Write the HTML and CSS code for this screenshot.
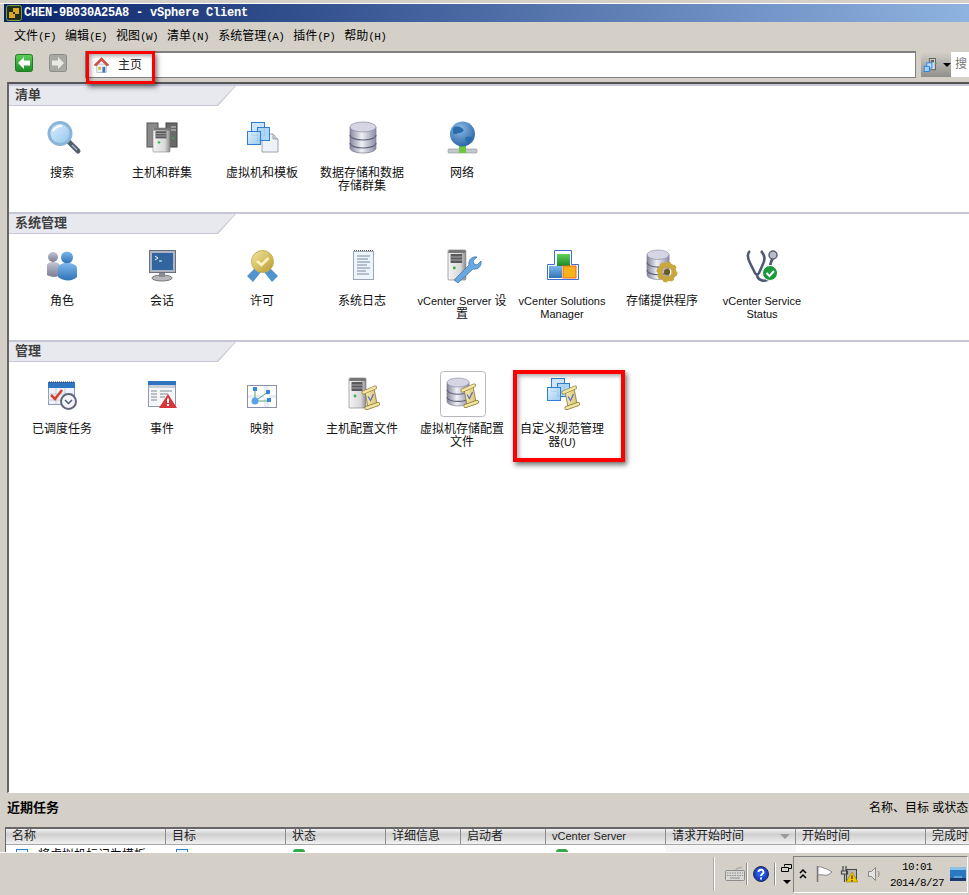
FILE: index.html
```html
<!DOCTYPE html>
<html lang="zh-CN">
<head>
    <meta charset="UTF-8">
    <title>vSphere Client</title>
    <link rel="stylesheet" href="styles.css">
</head>
<body>
    <!-- Formas compartilhadas dos icones -->
    <svg class="defs" aria-hidden="true">
        <defs>
            <linearGradient id="gSteel" x1="0" x2="1" y1="0" y2="0"><stop offset="0" stop-color="#85869c"/><stop offset=".45" stop-color="#f0f0f6"/><stop offset="1" stop-color="#8b8ca6"/></linearGradient>
            <linearGradient id="gBody" x1="0" x2="1" y1="0" y2="0"><stop offset="0" stop-color="#f4f4f4"/><stop offset=".7" stop-color="#d8d8d8"/><stop offset="1" stop-color="#8c8c8c"/></linearGradient>
            <linearGradient id="gGlass" x1="0" x2="1" y1="0" y2="1"><stop offset="0" stop-color="#dff0fc"/><stop offset="1" stop-color="#8fc4ee"/></linearGradient>
            <linearGradient id="gBlue" x1="0" x2="0" y1="0" y2="1"><stop offset="0" stop-color="#7db8ea"/><stop offset="1" stop-color="#2f74b8"/></linearGradient>
            <linearGradient id="gGrey" x1="0" x2="0" y1="0" y2="1"><stop offset="0" stop-color="#c4c4d4"/><stop offset="1" stop-color="#7c7c94"/></linearGradient>
            <linearGradient id="gGold" x1="0" x2="1" y1="0" y2="1"><stop offset="0" stop-color="#f4e8a0"/><stop offset="1" stop-color="#b89a30"/></linearGradient>
            <linearGradient id="gGreen" x1="0" x2="0" y1="0" y2="1"><stop offset="0" stop-color="#5fd05a"/><stop offset="1" stop-color="#1c8a26"/></linearGradient>
            <linearGradient id="gParch" x1="0" x2="1" y1="0" y2="0"><stop offset="0" stop-color="#f6eeb8"/><stop offset="1" stop-color="#d8c470"/></linearGradient>
            <radialGradient id="gGlobe" cx=".4" cy=".3" r=".8"><stop offset="0" stop-color="#8dbce8"/><stop offset="1" stop-color="#1f5c9e"/></radialGradient>

            <g id="db">
                <path d="M0 5v21c0 3 6 5 13 5s13-2 13-5V5z" fill="url(#gSteel)" stroke="#77788e" stroke-width=".7"/>
                <ellipse cx="13" cy="5" rx="13" ry="5" fill="#d5d5e4" stroke="#8c8ca4" stroke-width=".7"/>
                <path d="M0 13c0 3 6 5 13 5s13-2 13-5M0 21c0 3 6 5 13 5s13-2 13-5" fill="none" stroke="#62637c" stroke-width="1.2"/>
            </g>
            <g id="server">
                <rect width="17" height="30" rx="1" fill="url(#gBody)" stroke="#777" stroke-width=".6"/>
                <path d="M1 0h15l1 3H0z" fill="#777"/>
                <rect x="2.5" y="4" width="11" height="9" fill="#5a5a5e"/>
                <path d="M2.5 7h11M2.5 10h11" stroke="#a8a8a8"/>
                <circle cx="6" cy="18" r="1.4" fill="#35b54a"/>
            </g>
            <g id="scroll">
                <path d="M3 5L12 2l3 16-9 3z" fill="url(#gParch)" stroke="#8a7a38" stroke-width=".8"/>
                <path d="M1.500 6.500L13 1.500M4.500 22L16 18" fill="none" stroke="#8a7a38" stroke-width="4" stroke-linecap="round"/>
                <path d="M1.500 6.500L13 1.500M4.500 22L16 18" fill="none" stroke="#f0e4a0" stroke-width="2.600" stroke-linecap="round"/>
                <path d="M6 10.500l2.500 4 3-6.500" fill="none" stroke="#5f66c8" stroke-width="1.200"/>
            </g>
            <g id="windows">
                <rect x="4.5" y=".5" width="13" height="13" fill="#cfe6fa" stroke="#2f7fd0"/>
                <rect x="10.5" y="5.5" width="12" height="13" fill="#a9d3f5" fill-opacity=".9" stroke="#2f7fd0"/>
                <rect x=".5" y="9.5" width="13" height="13" fill="url(#gGlass)" fill-opacity=".9" stroke="#2f7fd0"/>
            </g>
        </defs>
    </svg>

    <div class="top-edge"></div>

    <div class="titlebar">
        <svg class="logo" viewBox="0 0 16 16"><rect x=".5" y=".5" width="15" height="15" rx="2" fill="#20301c" stroke="#7ba13a"/><path d="M3 7h4V3h6v6H9v4H3z" fill="#e0a820"/><path d="M7 7h2v2H7z" fill="#20301c"/></svg>
        <span class="title-text">CHEN-9B030A25A8 - vSphere Client</span>
    </div>

    <nav class="menubar">
        <span>文件<i>(F)</i></span>
        <span>编辑<i>(E)</i></span>
        <span>视图<i>(W)</i></span>
        <span>清单<i>(N)</i></span>
        <span>系统管理<i>(A)</i></span>
        <span>插件<i>(P)</i></span>
        <span>帮助<i>(H)</i></span>
    </nav>

    <div class="toolbar">
        <svg class="nav-btn" viewBox="0 0 18 18"><rect x=".5" y=".5" width="17" height="17" rx="2" fill="url(#gGreen)" stroke="#1f7a22"/><path d="M3 9l6-6v3.500h6v5H9V15z" fill="#fff"/></svg>
        <svg class="nav-btn nav-next" viewBox="0 0 18 18"><rect x=".5" y=".5" width="17" height="17" rx="2" fill="#a8a8a4" stroke="#8c8c88"/><path d="M15 9L9 3v3.500H3v5h6V15z" fill="#e8e8e4"/></svg>
        <div class="address">
            <svg class="home" viewBox="0 0 16 16"><rect x="3" y="7" width="10" height="9" fill="#eef2f8" stroke="#8fa0b8" stroke-width=".6"/><path d="M0 8l8-8 8 8-2.500 1L8 3.500 2.500 9z" fill="#d9534a" stroke="#a83a30" stroke-width=".5"/><rect x="4.500" y="10" width="3" height="3" fill="#e8b040"/><rect x="9" y="10" width="3" height="6" fill="#3a78b8"/></svg>
            <span>主页</span>
        </div>
        <div class="scope-btn">
            <svg width="22" height="20" viewBox="0 0 22 20"><rect x="8.500" y="2.500" width="7" height="13" fill="#d8d8dc" stroke="#555"/><rect x="10" y="4" width="4" height="3" fill="#666"/><path d="M15 8h3" stroke="#2ec04a"/><rect x="5.500" y="7.500" width="6" height="6" fill="#bfe0fa" stroke="#1f7fe0"/><rect x="2.500" y="11.500" width="6" height="6" fill="#9fd0f8" stroke="#1f7fe0"/></svg>
            <b class="caret"></b>
        </div>
        <div class="search-box">搜</div>
    </div>

    <main class="home-panel">
        <section class="group">
            <div class="group-head"><h2>清单</h2></div>
            <div class="items">
                <a class="item"><svg class="icon" viewBox="0 0 48 48"><path d="M31 28l9 9" stroke="#52606e" stroke-width="5" stroke-linecap="round"/><path d="M34 31l5 5" stroke="#9fb0c0" stroke-width="1.500"/><circle cx="22" cy="19.500" r="11" fill="url(#gGlass)" stroke="#8ab4d8" stroke-width="3"/><path d="M15 17c2-4 5-5 9-5" fill="none" stroke="#fff" stroke-width="2"/></svg><span class="label">搜索</span></a>
                <a class="item"><svg class="icon" viewBox="0 0 48 48"><rect x="9" y="9" width="11" height="24" fill="#8a8a8a" stroke="#555"/><rect x="28" y="9" width="11" height="24" fill="#6a6a6a" stroke="#444"/><path d="M33 13h5M33 16h5" stroke="#ccc"/><circle cx="35" cy="24" r="1" fill="#35b54a"/><use href="#server" transform="translate(15 14) scale(1 .8)"/></svg><span class="label">主机和群集</span></a>
                <a class="item"><svg class="icon" viewBox="0 0 48 48"><path d="M24 20h11l5 5v13H24z" fill="#eef2f6" stroke="#9aa4b0"/><path d="M35 20v5h5" fill="#c8d0d8" stroke="#9aa4b0"/><use href="#windows" transform="translate(9 8)"/></svg><span class="label">虚拟机和模板</span></a>
                <a class="item"><svg class="icon" viewBox="0 0 48 48"><use href="#db" transform="translate(12 8)"/></svg><span class="label">数据存储和数据存储群集</span></a>
                <a class="item"><svg class="icon" viewBox="0 0 48 48"><rect x="10" y="35" width="29" height="4" rx="1" fill="#c4c8cc" stroke="#8a9098" stroke-width=".6"/><rect x="21" y="31" width="7" height="8" fill="#6cc83c"/><circle cx="24.500" cy="20" r="12.500" fill="url(#gGlobe)"/><path d="M15 14c4-3 8-1 10 1s-2 4-4 4-4 3-6 0zM27 24c3-2 7-1 8 0-1 3-3 6-6 6z" fill="#2a6bad"/></svg><span class="label">网络</span></a>
            </div>
        </section>

        <section class="group">
            <div class="group-head"><h2>系统管理</h2></div>
            <div class="items">
                <a class="item"><svg class="icon" viewBox="0 0 48 48"><circle cx="15" cy="15" r="5" fill="url(#gGrey)"/><path d="M9 33V24c0-3 3-4 6-4s7 1 7 4v9c-4 3-10 2-13 0z" fill="url(#gGrey)"/><circle cx="29" cy="15.500" r="6" fill="url(#gBlue)"/><path d="M20 35V26c0-3 4-5 9-5s10 2 10 5v9c-5 5-14 4-19 0z" fill="url(#gBlue)"/></svg><span class="label">角色</span></a>
                <a class="item"><svg class="icon" viewBox="0 0 48 48"><ellipse cx="24" cy="36" rx="10" ry="3" fill="#b8b8bc" stroke="#77777c"/><rect x="21" y="30" width="6" height="5" fill="#8a8a90"/><rect x="11.500" y="8.500" width="26" height="22" fill="#aeb4c2" stroke="#6a7080"/><rect x="14" y="11" width="21" height="17" fill="#31659f"/><path d="M17 14l3 2-3 2M21 19h3" fill="none" stroke="#fff"/></svg><span class="label">会话</span></a>
                <a class="item"><svg class="icon" viewBox="0 0 48 48"><path d="M18 25L9 34l6 6 8-10zM31 25l9 9-6 6-8-10z" fill="#4f94ce"/><circle cx="24.500" cy="19.500" r="11" fill="url(#gGold)" stroke="#c8ae50"/><path d="M19 19l4.500 4 7-7" fill="none" stroke="#fff3c0" stroke-width="2.500"/></svg><span class="label">许可</span></a>
                <a class="item"><svg class="icon" viewBox="0 0 48 48"><rect x="15.500" y="9.500" width="20" height="28" fill="#eef4fb" stroke="#9aa8b8"/><path d="M16 9h1M18 9h1M20 9h1M22 9h1M24 9h1M26 9h1M28 9h1M30 9h1M32 9h1M34 9h1" stroke="#555" stroke-width="1" transform="translate(0 -.5)"/><path d="M19 14h13M19 17h11M19 20h13M19 23h10M19 26h13M19 29h9M19 32h12" stroke="#7888a0"/></svg><span class="label">系统日志</span></a>
                <a class="item"><svg class="icon" viewBox="0 0 48 48"><use href="#server" transform="translate(10 8) scale(1.050 1)"/><path d="M16 38l15-15c-1-5 3-9 8-8l-4 4 1 3 3 1 4-4c1 5-3 9-8 8L20 41z" fill="#6aa8e0" stroke="#2f6fb0" stroke-width=".7"/></svg><span class="label"><span class="en">vCenter Server </span>设置</span></a>
                <a class="item"><svg class="icon" viewBox="0 0 48 48"><path d="M9.500 22.500h7v-14h17v14h7v15h-31z" fill="#fff" stroke="#3f6fd0"/><rect x="19" y="12" width="13" height="12" fill="url(#gGreen)"/><rect x="11" y="24" width="13" height="12" fill="url(#gBlue)"/><rect x="25" y="24" width="13" height="12" fill="#f7b21c" stroke="#f06a20"/></svg><span class="label en">vCenter Solutions Manager</span></a>
                <a class="item"><svg class="icon" viewBox="0 0 48 48"><use href="#db" transform="translate(9 8) scale(.85 .95)"/><circle cx="29" cy="30" r="7" fill="none" stroke="#c8a83c" stroke-width="5"/><circle cx="29" cy="30" r="9" fill="none" stroke="#c8a83c" stroke-width="3" stroke-dasharray="3.500 3.500"/><circle cx="29" cy="30" r="3" fill="#6b5a24"/></svg><span class="label">存储提供程序</span></a>
                <a class="item"><svg class="icon" viewBox="0 0 48 48"><path d="M12 9C8 12 10 17 12 21l5 10c1 2 3 2 4 0l4-9c2-4 2-9-2-13M19 33c1 6 8 7 12 4M35 16c-2 3-3 6-3 10" fill="none" stroke="#4e5a74" stroke-width="2.600"/><circle cx="35" cy="13" r="4" fill="#b8bcc8" stroke="#5a6072" stroke-width="1.500"/><circle cx="32" cy="31" r="7.500" fill="#1a9a3a" stroke="#fff"/><path d="M28.500 31l3 3 4.500-5" fill="none" stroke="#fff" stroke-width="2"/></svg><span class="label en">vCenter Service Status</span></a>
            </div>
        </section>

        <section class="group">
            <div class="group-head"><h2>管理</h2></div>
            <div class="items">
                <a class="item"><svg class="icon" viewBox="0 0 48 48"><rect x="10.500" y="12.500" width="26" height="22" fill="#eef3fa" stroke="#8b9ab0"/><rect x="10" y="12" width="27" height="6" fill="#2f74c0"/><path d="M11 12h26" stroke="#333" stroke-dasharray="1 1"/><path d="M10 24h26M10 30h26M18 18v16M27 18v16" stroke="#c6cdd8"/><path d="M13 25l4 4 7-9" fill="none" stroke="#d8402c" stroke-width="2.500"/><circle cx="30.500" cy="31.500" r="7.500" fill="#f4f4f8" stroke="#61677a" stroke-width="2"/><path d="M27 30l3.500 3.500 3.500-3.500" fill="none" stroke="#4a5a80" stroke-width="1.500"/></svg><span class="label">已调度任务</span></a>
                <a class="item"><svg class="icon" viewBox="0 0 48 48"><rect x="10.500" y="11.500" width="27" height="25" fill="#f4f6fa" stroke="#8b9ab0"/><rect x="10" y="11" width="28" height="4" fill="#2f74c0"/><rect x="11" y="15" width="26" height="3" fill="#c9ced8"/><path d="M13 21h6M13 24h6M13 27h6M13 30h6M22 21h12M22 24h8M22 27h5" stroke="#808896"/><path d="M30 24l9 14H21z" fill="#d8353a"/><path d="M30 28.500v4.500M30 34v2" stroke="#fff" stroke-width="2"/></svg><span class="label">事件</span></a>
                <a class="item"><svg class="icon" viewBox="0 0 48 48"><rect x="9.500" y="15.500" width="29" height="22" fill="#fff" stroke="#8b90a8"/><path d="M26 16v21h5V16zM10 25h28v3H10z" fill="#e6edf4"/><path d="M17 19v12l13-9M17 31h14" fill="none" stroke="#5aa870"/><rect x="15" y="17" width="4" height="4" fill="#3a86d8"/><rect x="28" y="20" width="4" height="4" fill="#3a86d8"/><rect x="29" y="28" width="4" height="4" fill="#3a86d8"/><circle cx="17" cy="31" r="3.500" fill="#5aa2e6"/></svg><span class="label">映射</span></a>
                <a class="item"><svg class="icon" viewBox="0 0 48 48"><use href="#server" transform="translate(11 8)"/><use href="#scroll" transform="translate(24 16)"/></svg><span class="label">主机配置文件</span></a>
                <a class="item"><svg class="icon" viewBox="0 0 48 48"><rect x="2.500" y="1.500" width="45" height="45" rx="3" fill="#fff" stroke="#b8b8c0"/><use href="#db" transform="translate(9 8) scale(.85 .9)"/><use href="#scroll" transform="translate(23 14)"/></svg><span class="label">虚拟机存储配置文件</span></a>
                <a class="item"><svg class="icon" viewBox="0 0 48 48"><use href="#windows" transform="translate(9 8)"/><use href="#scroll" transform="translate(24 16)"/></svg><span class="label">自定义规范管理器<span class="en">(U)</span></span></a>
            </div>
        </section>
    </main>

    <div class="tasks-head">
        <strong>近期任务</strong>
        <span>名称、目标 或状态包含</span>
    </div>

    <div class="tasks">
        <div class="task-row task-header">
            <span>名称</span><span>目标</span><span>状态</span><span>详细信息</span><span>启动者</span><span class="en">vCenter Server</span><span class="sorted">请求开始时间<b class="sort-mark"></b></span><span>开始时间</span><span>完成时间</span>
        </div>
        <div class="task-row task-cells">
            <span><i class="mini doc"></i>将虚拟机标记为模板</span>
            <span><i class="mini doc"></i></span>
            <span class="status"><i class="mini ok"></i></span>
            <span></span>
            <span class="low">Administrator</span>
            <span><i class="mini ok"></i></span>
            <span class="low shade">2014/8/27 9:58:07</span>
            <span class="low">2014/8/27 9:58:07</span>
            <span class="low">2014/8/27 9:58:09</span>
        </div>
    </div>

    <footer class="taskbar">
        <div class="sep wide"></div>
        <svg class="keyboard" viewBox="0 0 22 16"><path d="M12 4c0-3 4-1 6-3" fill="none" stroke="#999"/><rect x="1.500" y="4.500" width="19" height="10" rx="1" fill="#d8d8d4" stroke="#8c8c8c"/><path d="M3 7h16M3 9.500h16" stroke="#8c8c8c" stroke-dasharray="1.500 1"/><path d="M6 12h10" stroke="#8c8c8c"/></svg>
        <div class="sep"></div>
        <svg class="help" viewBox="0 0 16 16"><circle cx="8" cy="8" r="7.500" fill="#1a3fc0" stroke="#233050"/><circle cx="8" cy="7" r="5" fill="#2a5ae0"/><path d="M5.500 6c0-3 5-3 5 0 0 2-2.500 2-2.500 4M8 11.500v2" fill="none" stroke="#fff" stroke-width="1.800"/></svg>
        <div class="sep"></div>
        <div class="restore">
            <svg width="11" height="9" viewBox="0 0 11 9"><path d="M3.500 2.500V.5h7v4h-3M.5 3.500h7v4h-7z" fill="none" stroke="#000"/></svg>
            <b class="caret"></b>
        </div>
        <div class="tray">
            <svg class="tray-up" viewBox="0 0 8 10"><path d="M1 4l3-3 3 3M1 9l3-3 3 3" fill="none" stroke="#000" stroke-width="1.500"/></svg>
            <svg class="tray-flag" viewBox="0 0 17 18"><path d="M1.500 1v16" stroke="#777" stroke-width="1.500"/><path d="M2 2c4-1 6 2 9 2l5 3-4 3c-3 1-6-1-10 0z" fill="#fff" stroke="#888"/></svg>
            <svg class="tray-net" viewBox="0 0 18 18"><rect x="6.500" y="4.500" width="10" height="11" fill="#b8b8b4" stroke="#444"/><path d="M3 1v5M6 1v5M1.500 6h6v3h-6zM4.500 9v8" fill="none" stroke="#444" stroke-width="1.200"/><path d="M12 7l6 10H6z" fill="#f0c800" stroke="#8a7000" stroke-width=".5"/><path d="M12 10.500v3.500M12 15v1.500" stroke="#000"/></svg>
            <svg class="tray-sound" viewBox="0 0 14 16"><path d="M1.500 5.500h3l4-4v13l-4-4h-3z" fill="#e4e4e0" stroke="#888"/><path d="M11 5c1.500 2 1.500 4 0 6" fill="none" stroke="#888"/></svg>
            <div class="clock"><span>10:01</span><span>2014/8/27</span></div>
            <svg class="tray-desk" viewBox="0 0 16 14"><rect width="16" height="14" fill="#2a78c0"/><rect width="16" height="3" fill="#8cc0e8"/><rect y="11" width="16" height="3" fill="#1a3a70"/><path d="M4 10h8" stroke="#8ad0f0"/></svg>
        </div>
    </footer>

    <!-- Marcacoes vermelhas da captura -->
    <div class="mark mark-home"></div>
    <div class="mark mark-custom"></div>
</body>
</html>
```

FILE: styles.css
```css
* {
    margin: 0;
    padding: 0;
    box-sizing: border-box;
}

html, body {
    height: 100%;
}

body {
    display: flex;
    flex-direction: column;
    height: 895px;
    overflow: hidden;
    background: #d4d0c8;
    font: 12px/13px "Liberation Sans", "Noto Sans CJK SC", sans-serif;
    color: #000;
}

.defs {
    display: block;
    width: 0;
    height: 0;
}

.en {
    font-size: 11px;
}

.top-edge {
    height: 4px;
    flex: none;
    border-top: 1px solid #d4d0c8;
    border-bottom: 1px solid #fff;
}

/* Barra de titulo */
.titlebar {
    display: flex;
    align-items: center;
    flex: none;
    height: 18px;
    margin-left: 4px;
    padding-left: 2px;
    background: linear-gradient(to right, #0a246a, #8fb3e0);
    color: #fff;
}

.logo {
    width: 16px;
    height: 16px;
}

.title-text {
    margin-left: 2px;
    font: bold 12px/18px "Liberation Mono", monospace;
    letter-spacing: -.2px;
}

.menubar {
    display: flex;
    flex: none;
    gap: 9px;
    height: 28px;
    padding: 8px 0 0 14px;
    line-height: 13px;
}

.menubar i,
.clock span {
    font: 11px/13px "Liberation Mono", monospace;
    letter-spacing: -.6px;
}

.menubar i {
    font-style: normal;
}

/* Barra de navegacao */
.toolbar {
    display: flex;
    flex: none;
    align-items: flex-start;
    height: 32px;
}

.nav-btn {
    width: 18px;
    height: 18px;
    margin: 4px 0 0 15px;
    flex: none;
}

.nav-next {
    margin-left: 16px;
}

.address {
    display: flex;
    align-items: center;
    flex: none;
    width: 831px;
    height: 27px;
    margin: 1px 0 0 18px;
    padding-left: 8px;
    background: #fff;
    border: 1px solid #808080;
    border-top-width: 2px;
}

.home {
    width: 15px;
    height: 16px;
}

.address span {
    margin-left: 9px;
    color: #222;
}

.scope-btn {
    display: flex;
    align-items: center;
    flex: none;
    gap: 2px;
    width: 30px;
    height: 25px;
    margin: 2px 0 0 5px;
    padding-left: 1px;
    background: linear-gradient(#d4d0c8, #8f8f8b);
}

.caret {
    width: 0;
    height: 0;
    border: 4px solid transparent;
    border-top-color: #000;
    border-bottom: 0;
}

.search-box {
    flex: 1;
    height: 25px;
    margin-top: 2px;
    padding: 6px 0 0 4px;
    background: #fff;
    color: #777;
}

/* Painel principal */
.home-panel {
    flex: 1;
    min-height: 0;
    margin-left: 7px;
    background: #fff;
    border-top: 2px solid #555;
    border-left: 2px solid #666;
    border-bottom: 1px solid #fff;
}

.group {
    height: 128px;
    border-top: 2px solid #c6c6d6;
}

.group-head {
    width: 227px;
    height: 20px;
    background: #c8c8d8;
    clip-path: polygon(0 0, 100% 0, 209px 100%, 0 100%);
}

.group-head h2 {
    width: 226px;
    height: 19px;
    padding-left: 6px;
    background: #e8e8ef;
    clip-path: polygon(0 0, 100% 0, 208px 100%, 0 100%);
    font-size: 13px;
    line-height: 17px;
    font-weight: bold;
    color: #404040;
}

.items {
    display: flex;
    margin-top: 8px;
    padding-left: 3px;
}

.item {
    display: flex;
    flex-direction: column;
    align-items: center;
    flex: none;
    width: 100px;
}

.icon {
    width: 48px;
    height: 48px;
    flex: none;
}

.label {
    width: 90px;
    margin-top: 5px;
    text-align: center;
    color: #111;
}

/* Tarefas recentes */
.tasks-head {
    display: flex;
    flex: none;
    justify-content: space-between;
    height: 34px;
    padding: 8px 0 0 7px;
}

.tasks-head strong {
    font-size: 13px;
}

.tasks-head span {
    width: 100px;
    padding-top: 1px;
    overflow: hidden;
    white-space: nowrap;
}

.tasks {
    flex: none;
    height: 25px;
    margin-left: 5px;
    overflow: hidden;
    border-top: 2px solid #666;
    border-left: 1px solid #666;
    background: #fff;
}

.task-row {
    display: grid;
    grid-template-columns: 160px 120px 100px 75px 85px 120px 130px 130px 100px;
}

.task-header {
    height: 16px;
    border-bottom: 1px solid #a8a8a8;
    background: linear-gradient(#f2f2f2, #cfcfcf 35%, #dcdcdc 60%, #f0f0f0);
}

.task-header span {
    position: relative;
    padding: 1px 0 0 6px;
    border-right: 1px solid #8c8c8c;
    white-space: nowrap;
    color: #222;
}

.sort-mark {
    position: absolute;
    right: 5px;
    top: 5px;
    width: 0;
    height: 0;
    border: 5px solid transparent;
    border-top: 5px solid #999;
    border-bottom: 0;
}

.task-cells {
    height: 7px;
    overflow: hidden;
}

.task-cells span {
    display: block;
    padding: 4px 0 0 10px;
    white-space: nowrap;
}

.task-cells .status {
    padding-left: 7px;
}

.task-cells .low {
    padding: 6px 0 0 31px;
}

.task-cells .shade {
    background: #f5f5f5;
}

.mini {
    display: inline-block;
    width: 12px;
    height: 12px;
    margin-right: 10px;
    vertical-align: top;
}

.doc {
    background: #eef4fb;
    border: 1px solid #2f7fd0;
}

.ok {
    background: #35a84a;
    border-radius: 3px;
}

/* Barra inferior */
.taskbar {
    display: flex;
    flex: none;
    align-items: center;
    justify-content: flex-end;
    height: 43px;
    padding-right: 1px;
    border-top: 1px solid #fff;
}

.sep {
    width: 2px;
    height: 22px;
    border-left: 1px solid #8c8c8c;
    border-right: 1px solid #fff;
}

.sep.wide {
    height: 34px;
    margin-right: 9px;
    border-left-color: #aaa;
}

.keyboard {
    width: 22px;
    height: 16px;
}

.help {
    width: 16px;
    height: 16px;
    margin: 0 5px;
}

.restore {
    display: flex;
    flex-direction: column;
    align-items: center;
    gap: 7px;
    width: 11px;
    margin: 0 1px 0 5px;
}

.tray {
    display: flex;
    align-items: center;
    width: 175px;
    height: 37px;
    border: 1px solid;
    border-color: #808080 #fff #fff #808080;
}

.tray-up {
    width: 8px;
    height: 10px;
    margin-left: 5px;
}

.tray-flag {
    width: 17px;
    height: 18px;
    margin-left: 9px;
}

.tray-net {
    width: 18px;
    height: 18px;
    margin-left: 7px;
}

.tray-sound {
    width: 14px;
    height: 16px;
    margin-left: 9px;
}

.clock {
    display: flex;
    flex-direction: column;
    align-items: center;
    gap: 3px;
    width: 62px;
    margin-left: 5px;
    padding-top: 2px;
}

.tray-desk {
    width: 16px;
    height: 14px;
    margin: 0 0 1px 2px;
}

/* Marcacoes sobre a captura */
.mark {
    position: absolute;
    border: 3px solid #f00;
    box-shadow: 2px 3px 5px rgba(0, 0, 0, .55), inset 2px 2px 4px rgba(0, 0, 0, .35);
}

.mark-home {
    left: 86px;
    top: 51px;
    width: 69px;
    height: 33px;
}

.mark-custom {
    left: 513px;
    top: 370px;
    width: 112px;
    height: 92px;
    border-width: 4px;
}
```
